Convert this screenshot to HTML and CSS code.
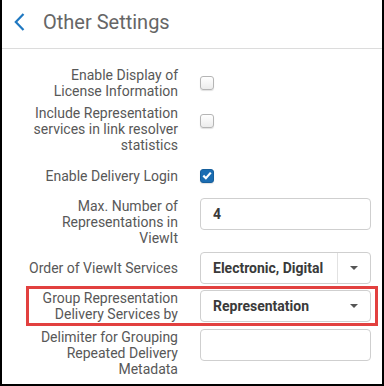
FILE: index.html
```html
<!DOCTYPE html>
<html>
  <head>
    <meta charset="utf-8">
    <title>Other Settings</title>
    <link rel="stylesheet" href="styles.css">
  </head>
  <body>
  <div class="frame">
    <div class="header">
      <svg class="back" width="11" height="18" viewBox="0 0 11 18"><path d="M9.5 1 L1.8 9 L9.5 17" fill="none" stroke="#1f78c1" stroke-width="2.2"/></svg>
      <h1>Other Settings</h1>
    </div>

    <div class="form">
      <div class="row">
        <label class="lbl">Enable Display of License Information</label>
        <div class="ctl"><span class="check"></span></div>
      </div>

      <div class="row">
        <label class="lbl">Include Representation services in link resolver statistics</label>
        <div class="ctl"><span class="check"></span></div>
      </div>

      <div class="row">
        <label class="lbl">Enable Delivery Login</label>
        <div class="ctl"><span class="check on"><svg width="10" height="9" viewBox="0 0 10 9"><path d="M1.3 4.6 L3.9 7.2 L8.8 1.6" fill="none" stroke="#fff" stroke-width="2.2"/></svg></span></div>
      </div>

      <div class="row">
        <label class="lbl">Max. Number of Representations in ViewIt</label>
        <div class="ctl"><div class="field">4</div></div>
      </div>

      <div class="row">
        <label class="lbl">Order of ViewIt Services</label>
        <div class="ctl"><div class="field select split"><span class="val">Electronic, Digital</span><span class="caret"></span></div></div>
      </div>

      <div class="row marked">
        <label class="lbl">Group Representation Delivery Services by</label>
        <div class="ctl"><div class="field select"><span class="val">Representation</span><span class="caret"></span></div></div>
      </div>

      <div class="row">
        <label class="lbl">Delimiter for Grouping Repeated Delivery Metadata</label>
        <div class="ctl"><div class="field"></div></div>
      </div>
    </div>
  </div>
  </body>
</html>
```

FILE: styles.css
```css
body { margin: 0; background: #fff; font-family: Roboto, "Liberation Sans", sans-serif; }

.frame { width: 384px; height: 386px; box-sizing: border-box; border: 2px solid #000; border-top: none; overflow: hidden; }

.header { height: 49px; box-sizing: border-box; display: flex; align-items: center; padding: 0 0 5px 12px; border-bottom: 1px solid #dcdcdc; }
.header .back { display: block; }
.header h1 { margin: 0 0 0 18px; font-size: 20px; font-weight: 400; color: #666; }

.form { display: flex; flex-direction: column; gap: 6.3px; padding: 18px 4px 0 24px; }

.row { position: relative; display: flex; align-items: flex-start; gap: 22px; padding-right: 7px; }
/* highlight drawn over the row */
.row.marked::after { content: ""; position: absolute; top: -4px; bottom: -4px; left: 0; right: 0; border: 3px solid #e2403f; pointer-events: none; }

.lbl { width: 152px; flex: none; align-self: center; text-align: right; font-size: 14px; line-height: 16px; color: #585858; }

.ctl { flex: 1; height: 32px; display: flex; align-items: center; }

.check { width: 14px; height: 14px; box-sizing: border-box; border: 1px solid #b5b5b5; border-radius: 3px; background: linear-gradient(#fff, #ececec); box-shadow: 0 1px 1px rgba(0,0,0,0.12); display: flex; align-items: center; justify-content: center; }
.check.on { background: #1b6db2; border-color: #165f9c; }

.field { width: 100%; height: 32px; box-sizing: border-box; border: 1px solid #cfcfcf; border-radius: 4px; padding: 0 0 0 12px; display: flex; align-items: center; font-size: 14px; font-weight: 700; color: #3a3a3a; }
.select .val { flex: 1; }
.select .caret { width: 32px; align-self: stretch; display: flex; align-items: center; justify-content: center; }
.select .caret::before { content: ""; border-left: 4px solid transparent; border-right: 4px solid transparent; border-top: 4px solid #555; }
.select.split .caret { border-left: 1px solid #e2e2e2; }
```
